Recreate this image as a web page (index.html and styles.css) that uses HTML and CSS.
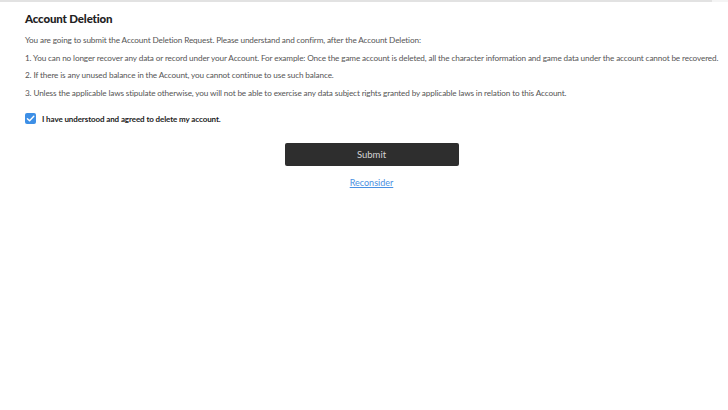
FILE: index.html
```html
<!DOCTYPE html>
<html lang="en">
<head>
<meta charset="utf-8">
<title>Account Deletion</title>
<link rel="stylesheet" href="styles.css">
</head>
<body>
<div class="topbar"><div class="topbar-fill"></div></div>
<main class="page">
  <h1 class="title">Account Deletion</h1>
  <p class="line">You are going to submit the Account Deletion Request. Please understand and confirm, after the Account Deletion:</p>
  <p class="line">1. You can no longer recover any data or record under your Account. For example: Once the game account is deleted, all the character information and game data under the account cannot be recovered.</p>
  <p class="line">2. If there is any unused balance in the Account, you cannot continue to use such balance.</p>
  <p class="line">3. Unless the applicable laws stipulate otherwise, you will not be able to exercise any data subject rights granted by applicable laws in relation to this Account.</p>
  <label class="agree">
    <span class="check"><svg viewBox="0 0 12 12" width="11" height="11"><path d="M2.6 6.2 L5 8.5 L9.6 3.6" fill="none" stroke="#fff" stroke-width="1.5" stroke-linecap="round" stroke-linejoin="round"/></svg></span>
    <span class="agree-text">I have understood and agreed to delete my account.</span>
  </label>
  <div class="actions">
    <button class="submit" type="button">Submit</button>
    <a class="reconsider" href="#">Reconsider</a>
  </div>
</main>
</body>
</html>
```
FILE: styles.css
```css
html, body {
  margin: 0;
  padding: 0;
  background: #fff;
}
body {
  font-family: Lato, "Open Sans", sans-serif;
  color: #555;
}
.topbar {
  height: 2px;
  background: #f4f4f4;
}
.topbar-fill {
  width: 712px;
  height: 2px;
  background: #e2e2e2;
}
.page {
  padding: 8px 0 0 25px;
}
.title {
  margin: 0 0 4px;
  font-size: 11.5px;
  line-height: 18px;
  font-weight: 900;
  letter-spacing: -0.15px;
  color: #222;
}
.line {
  margin: 0;
  font-size: 8.2px;
  letter-spacing: -0.13px;
  line-height: 17.6px;
  color: #555;
  white-space: nowrap;
}
.agree {
  display: flex;
  align-items: center;
  gap: 6px;
  margin-top: 11px;
}
.check {
  width: 11px;
  height: 11px;
  border-radius: 2px;
  background: #3d8fe6;
  display: flex;
  align-items: center;
  justify-content: center;
}
.agree-text {
  font-size: 8px;
  letter-spacing: -0.1px;
  font-weight: 700;
  color: #222;
}
.actions {
  display: flex;
  flex-direction: column;
  align-items: center;
  margin-left: -25px;
  padding-top: 19px;
  padding-left: 15px;
}
.submit {
  width: 174px;
  height: 23px;
  border: none;
  border-radius: 2px;
  background: #2e2e2e;
  color: #d4d4d4;
  font-family: inherit;
  font-size: 9.5px;
  padding: 0;
}
.reconsider {
  margin-top: 11px;
  font-size: 9px;
  color: #4a90e2;
  text-decoration: underline;
}
```
